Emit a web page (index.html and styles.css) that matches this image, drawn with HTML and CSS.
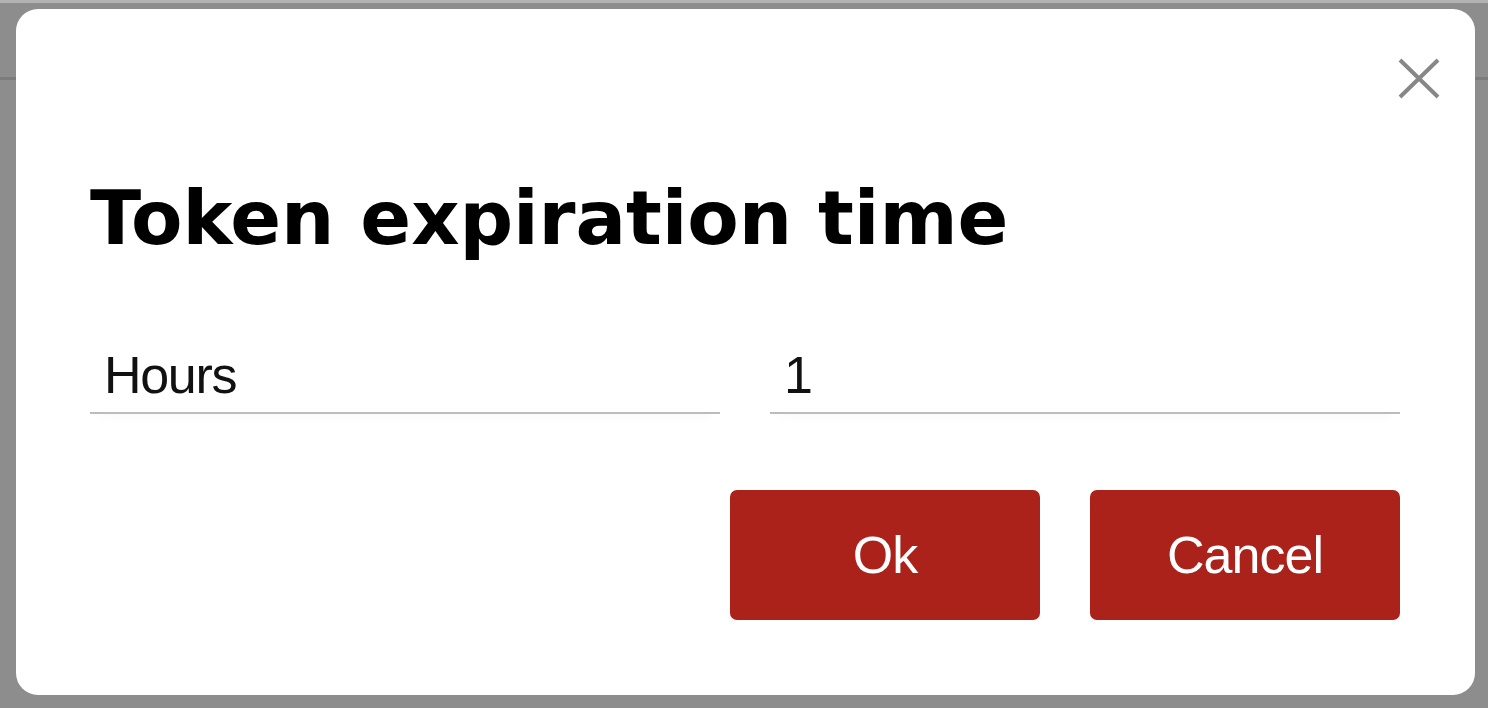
FILE: index.html
```html
<!DOCTYPE html>
<html lang="en">
<head>
<meta charset="utf-8">
<title>Token expiration time</title>
<link rel="stylesheet" href="styles.css">
</head>
<body>
  <header class="app-header"></header>

  <div class="overlay">
    <div class="dialog" role="dialog" aria-labelledby="dlg-title">
      <button class="close" aria-label="Close">
        <svg viewBox="0 0 44 44" width="44" height="44">
          <path d="M3 4 L41 41 M41 4 L3 41" stroke="#878787" stroke-width="4" fill="none"/>
        </svg>
      </button>

      <h1 class="title" id="dlg-title">Token expiration time</h1>

      <div class="fields">
        <input class="field" type="text" value="Hours" readonly>
        <input class="field" type="text" value="1">
      </div>

      <div class="actions">
        <button class="btn">Ok</button>
        <button class="btn">Cancel</button>
      </div>
    </div>
  </div>
</body>
</html>
```

FILE: styles.css
```css
html, body {
  margin: 0;
  padding: 0;
  height: 100%;
}

body {
  background: #8d8d8d;
  font-family: "Liberation Sans", Arial, sans-serif;
  overflow: hidden;
}

/* page header behind the modal overlay */
.app-header {
  height: 74px;
  border-top: 3px solid #b3b3b3;
  border-bottom: 3px solid #7c7c7c;
  background: #8d8d8d;
}

.overlay {
  position: fixed;
  inset: 0;
  padding: 9px 13px 13px 16px;
  display: flex;
  align-items: flex-start;
}

.dialog {
  position: relative;
  box-sizing: border-box;
  width: 1459px;
  height: 686px;
  background: #fff;
  border-radius: 22px;
  padding: 172px 75px 0 74px;
}

.close {
  position: absolute;
  top: 47px;
  right: 34px;
  width: 44px;
  height: 44px;
  padding: 0;
  border: 0;
  background: none;
  cursor: pointer;
}

.close svg {
  display: block;
}

.title {
  margin: 0;
  font-family: "DejaVu Sans", Verdana, sans-serif;
  font-weight: bold;
  font-size: 75px;
  line-height: 75px;
  letter-spacing: -0.1px;
  color: #000;
}

.fields {
  display: flex;
  gap: 50px;
  margin-top: 90px;
}

.field {
  flex: 1;
  min-width: 0;
  height: 58px;
  padding: 0 14px 8px;
  border: 0;
  border-bottom: 2px solid #bcbcbc;
  outline: none;
  background: transparent;
  font-family: "Liberation Sans", Arial, sans-serif;
  font-size: 52px;
  line-height: 58px;
  letter-spacing: -1.3px;
  color: #111;
  box-shadow: 0 10px 10px -8px rgba(0, 0, 0, 0.03);
}

.actions {
  display: flex;
  justify-content: flex-end;
  gap: 50px;
  margin-top: 76px;
}

.btn {
  width: 310px;
  height: 130px;
  border: 0;
  border-radius: 7px;
  background: #aa2219;
  color: #fff;
  font-family: "Liberation Sans", Arial, sans-serif;
  font-size: 52px;
  letter-spacing: -1px;
  cursor: pointer;
}
```
